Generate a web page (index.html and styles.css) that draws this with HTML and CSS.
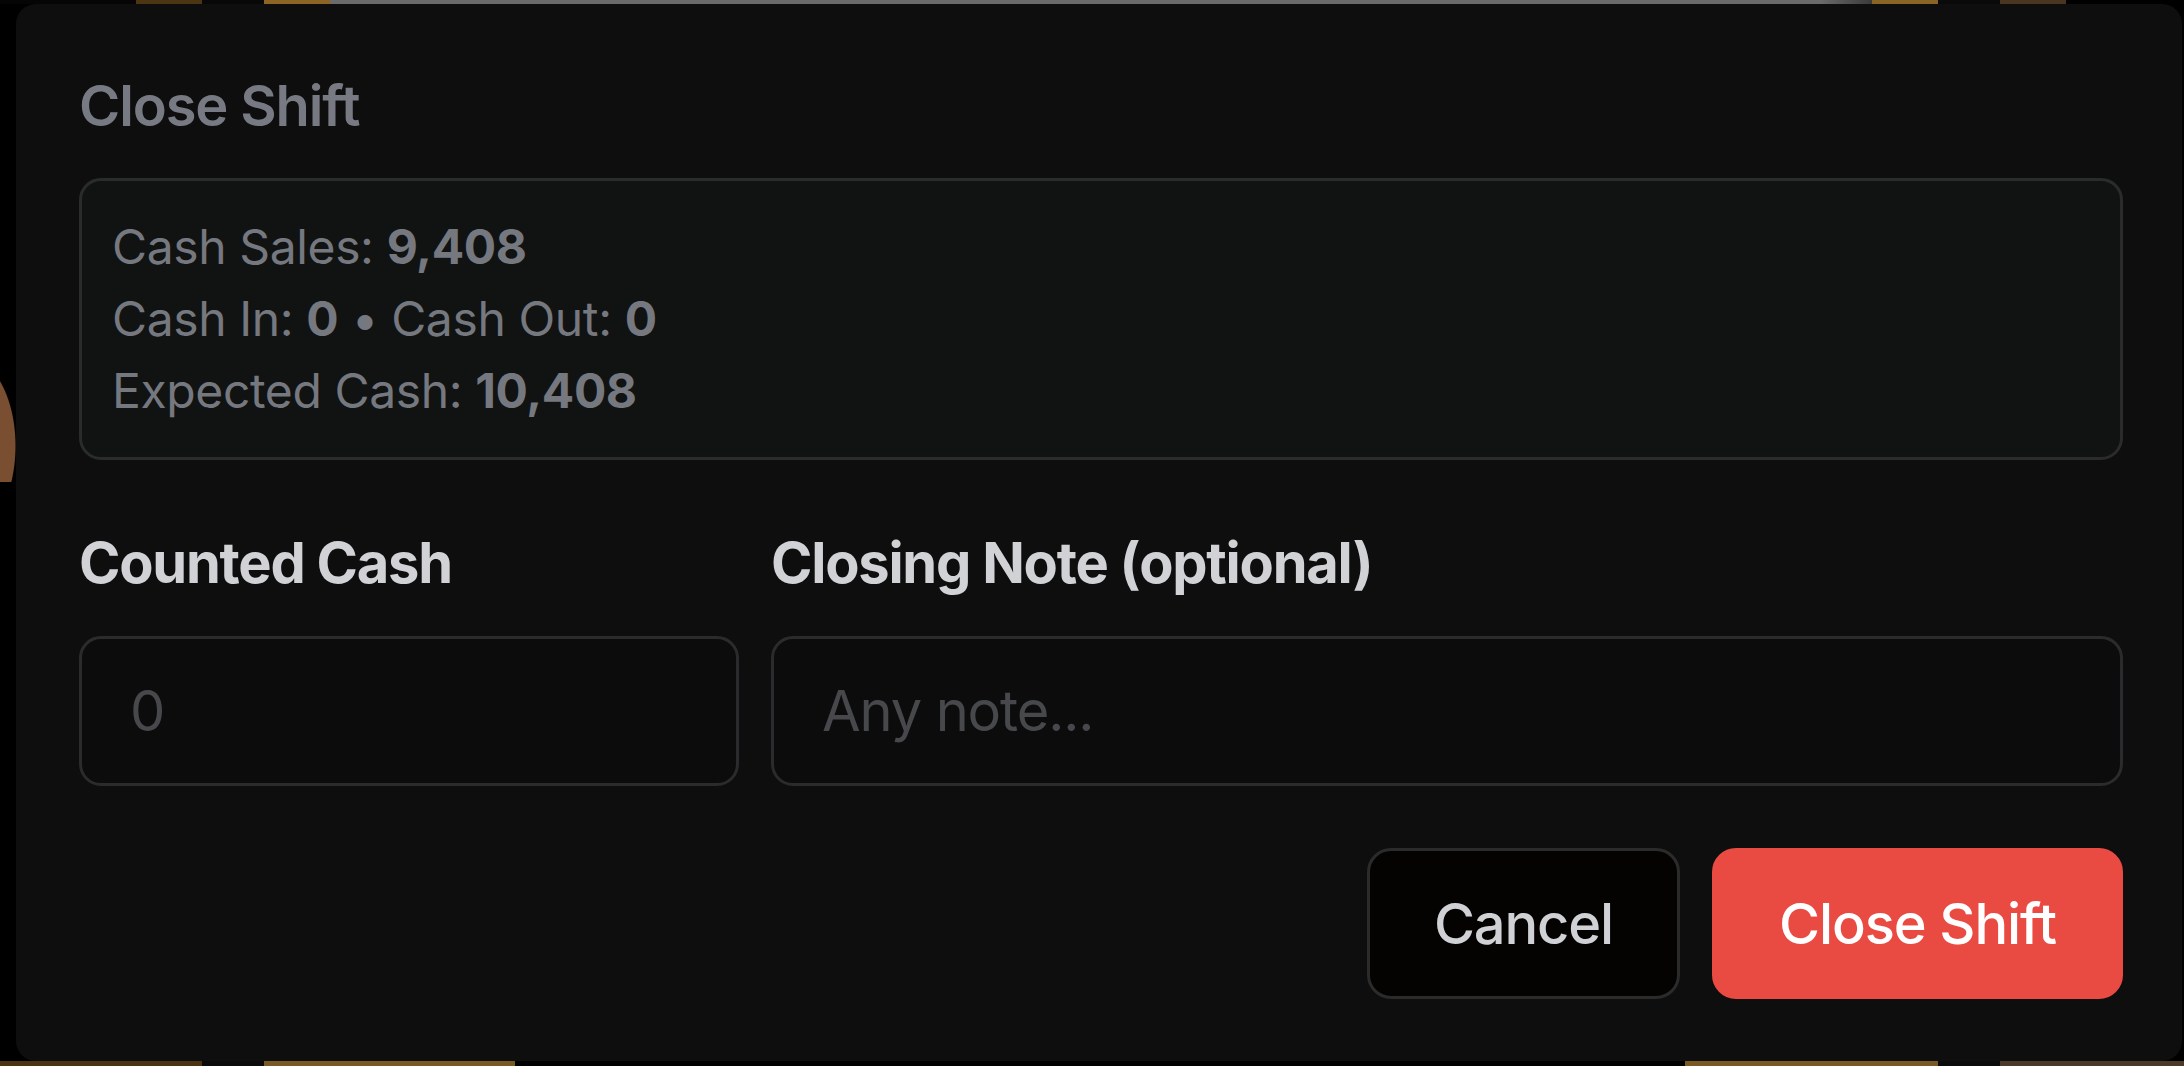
FILE: index.html
```html
<!DOCTYPE html>
<html lang="en">
<head>
<meta charset="utf-8">
<title>Close Shift</title>
<link rel="stylesheet" href="styles.css">
</head>
<body>
<div class="backdrop">
  <div class="modal">
    <h2 class="title">Close Shift</h2>
    <div class="summary">
      <div>Cash Sales: <b>9,408</b></div>
      <div>Cash In: <b>0</b> • Cash Out: <b>0</b></div>
      <div>Expected Cash: <b>10,408</b></div>
    </div>
    <div class="fields">
      <div class="field">
        <label class="label">Counted Cash</label>
        <input class="input" type="text" placeholder="0">
      </div>
      <div class="field field-wide">
        <label class="label">Closing Note (optional)</label>
        <input class="input" type="text" placeholder="Any note...">
      </div>
    </div>
    <div class="actions">
      <button class="btn btn-cancel" type="button">Cancel</button>
      <button class="btn btn-close" type="button">Close Shift</button>
    </div>
  </div>
</div>
</body>
</html>
```

FILE: styles.css
```css
html, body {
  margin: 0;
  padding: 0;
}

body {
  font-family: Inter, "Noto Sans", "Liberation Sans", sans-serif;
  background:
    linear-gradient(to right, #050505 0 136px, #4b3512 136px 202px, #080808 202px 264px, #8c6423 264px 330px, #6b6b6b 330px 1820px, #3a3a3a 1872px, #8a6424 1872px 1938px, #0a0a0a 1938px 2000px, #4a3520 2000px 2066px, #000 2066px) left top / 100% 4px no-repeat,
    linear-gradient(to right, #4a3412 0 202px, #0a0a0a 202px 264px, #7a5a24 264px 515px, #000 515px 1685px, #7a5a24 1685px 1938px, #0a0a0a 1938px 2000px, #4a3a2a 2000px) left bottom / 100% 5px no-repeat,
    radial-gradient(ellipse 50px 90px at -34px 446px, #7a4e30 98%, transparent 100%) 0 0 / 16px 482px no-repeat,
    #000;
}

.backdrop {
  height: 1066px;
  box-sizing: border-box;
  padding: 4px 2px 5px 16px;
  display: flex;
}

.modal {
  flex: 1;
  background: #0e0e0e;
  border-radius: 20px;
  padding: 63px 59px 62px 63px;
  display: flex;
  flex-direction: column;
}

.title {
  margin: 0;
  font-size: 56px;
  line-height: 78px;
  font-weight: 600;
  letter-spacing: -0.02em;
  color: #777a82;
}

.summary {
  margin-top: 33px;
  border: 3px solid #2a2c2c;
  border-radius: 22px;
  background: #111313;
  padding: 30px 30px;
  font-size: 48px;
  line-height: 72px;
  letter-spacing: -0.008em;
  color: #76787f;
}

.summary b {
  font-weight: 700;
}

.fields {
  margin-top: 64px;
  display: grid;
  grid-template-columns: repeat(3, 1fr);
  column-gap: 32px;
}

.field-wide {
  grid-column: span 2;
}

.label {
  display: block;
  font-size: 56px;
  line-height: 78px;
  font-weight: 700;
  letter-spacing: -0.022em;
  color: #d1d2d5;
  margin-bottom: 34px;
}

.input {
  display: block;
  width: 100%;
  box-sizing: border-box;
  height: 150px;
  margin: 0;
  border: 3px solid #2a2b2c;
  border-radius: 22px;
  background: #0c0c0c;
  padding: 0 48px;
  font-family: Inter, "Noto Sans", "Liberation Sans", sans-serif;
  font-size: 56px;
  font-weight: 400;
  letter-spacing: -0.02em;
  color: #d1d2d5;
  outline: none;
}

.input::placeholder {
  color: #47484b;
  opacity: 1;
}

.actions {
  margin-top: 62px;
  display: flex;
  justify-content: flex-end;
  gap: 32px;
}

.btn {
  height: 151px;
  box-sizing: border-box;
  border-radius: 24px;
  padding: 0 64px;
  margin: 0;
  font-family: Inter, "Noto Sans", "Liberation Sans", sans-serif;
  font-size: 56px;
  font-weight: 500;
  letter-spacing: -0.02em;
  cursor: pointer;
}

.btn-cancel {
  background: #050302;
  border: 3px solid #2b2b2b;
  color: #d0d1d4;
}

.btn-close {
  background: #e94b43;
  border: 3px solid #e94b43;
  color: #ffffff;
}
```
